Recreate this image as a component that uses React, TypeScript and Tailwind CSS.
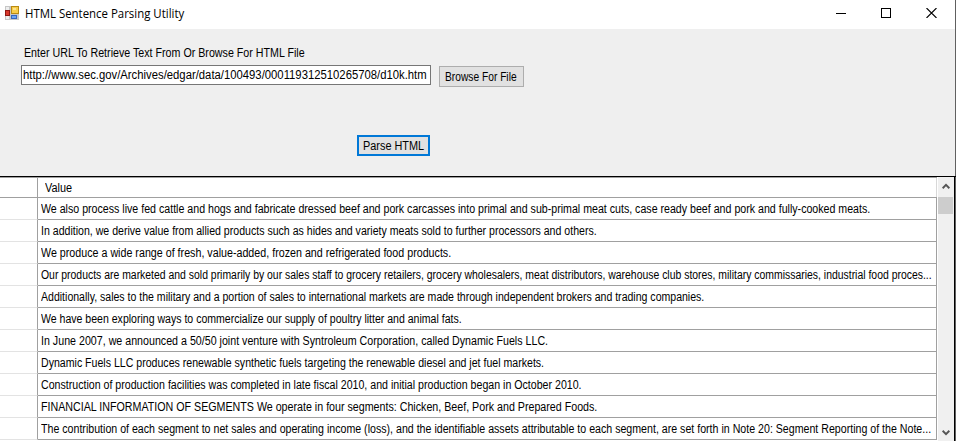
import { useLayoutEffect, useRef } from "react";

// Condenses a single line of text so that it fills the given width.
function Fit({ text, width, className = "" }: { text: string; width: number; className?: string }) {
  const ref = useRef<HTMLSpanElement>(null);
  useLayoutEffect(() => {
    const el = ref.current;
    if (!el) return;
    el.style.transform = `scaleX(${width / el.offsetWidth})`;
  }, [text, width]);
  return (
    <span ref={ref} className={`block w-max origin-left whitespace-pre ${className}`}>
      {text}
    </span>
  );
}

const rows: [string, number][] = [
  ["We also process live fed cattle and hogs and fabricate dressed beef and pork carcasses into primal and sub-primal meat cuts, case ready beef and pork and fully-cooked meats.", 829],
  ["In addition, we derive value from allied products such as hides and variety meats sold to further processors and others.", 556],
  ["We produce a wide range of fresh, value-added, frozen and refrigerated food products.", 410],
  ["Our products are marketed and sold primarily by our sales staff to grocery retailers, grocery wholesalers, meat distributors, warehouse club stores, military commissaries, industrial food proces...", 891],
  ["Additionally, sales to the military and a portion of sales to international markets are made through independent brokers and trading companies.", 663],
  ["We have been exploring ways to commercialize our supply of poultry litter and animal fats.", 421],
  ["In June 2007, we announced a 50/50 joint venture with Syntroleum Corporation, called Dynamic Fuels LLC.", 507],
  ["Dynamic Fuels LLC produces renewable synthetic fuels targeting the renewable diesel and jet fuel markets.", 503],
  ["Construction of production facilities was completed in late fiscal 2010, and initial production began in October 2010.", 541],
  ["FINANCIAL INFORMATION OF SEGMENTS We operate in four segments: Chicken, Beef, Pork and Prepared Foods.", 556],
  ["The contribution of each segment to net sales and operating income (loss), and the identifiable assets attributable to each segment, are set forth in Note 20: Segment Reporting of the Note...", 890],
];

function AppIcon() {
  return (
    <svg width="14" height="14" viewBox="0 0 14 14" shapeRendering="crispEdges">
      <rect width="14" height="14" fill="#c6c6c6" />
      <path d="M1 1h3v3H1zM1 10h3v3H1z" fill="#eee" />
      <rect x="0" y="4" width="5" height="6" fill="#8e1712" />
      <rect x="1" y="5" width="3" height="4" fill="#d8372b" />
      <rect x="6" y="0" width="8" height="8" fill="#b98a12" />
      <rect x="7" y="1" width="6" height="6" fill="#f8cc48" />
      <rect x="8" y="2" width="3" height="2" fill="#fde38c" />
      <rect x="6" y="9" width="6" height="4" fill="#3565bd" />
      <rect x="7" y="10" width="4" height="2" fill="#6ba3f2" />
    </svg>
  );
}

function Chevron({ down = false }: { down?: boolean }) {
  return (
    <svg width="8" height="7" viewBox="0 0 8 7" className={down ? "rotate-180" : ""}>
      <path d="M0.6 5.2 4 1.8 7.4 5.2" fill="none" stroke="#555" strokeWidth="2" />
    </svg>
  );
}

export default function App() {
  return (
    <div className="flex h-[441px] w-[956px] flex-col overflow-hidden bg-[#efefef] font-['Liberation_Sans',Arial,sans-serif] text-[12.5px] text-black">
      <header className="flex h-[29px] shrink-0 items-start border-r border-[#606060] bg-white">
        <div className="pt-[6px] pl-[5px]">
          <AppIcon />
        </div>
        <div className="w-[170px] pl-[6px] font-['Open_Sans','Noto_Sans',sans-serif] text-[12px] leading-[28px]">
          <Fit text="HTML Sentence Parsing Utility" width={159} />
        </div>
        <div className="ml-auto flex gap-[35px] pt-[8px] pr-[18px]">
          <svg width="10" height="10" shapeRendering="crispEdges"><path d="M0 5.5h10" stroke="#000" /></svg>
          <svg width="10" height="10" shapeRendering="crispEdges"><path d="M.5 .5h9v9h-9z" fill="none" stroke="#000" /></svg>
          <svg width="11" height="10"><path d="M.5 0l10 10M10.5 0l-10 10" stroke="#000" strokeWidth="1.1" /></svg>
        </div>
      </header>

      <section className="flex h-[147px] shrink-0 flex-col items-start border-r border-[#606060] pl-[21px]">
        <label className="mt-[14px] h-[22px] pl-[3px] leading-[20px]">
          <Fit text="Enter URL To Retrieve Text From Or Browse For HTML File" width={281} />
        </label>
        <div className="flex items-start gap-[8px]">
          <div className="h-[20px] w-[410px] border border-[#767676] bg-white pl-px leading-[18px]">
            <Fit text="http://www.sec.gov/Archives/edgar/data/100493/000119312510265708/d10k.htm" width={404} />
          </div>
          <button className="mt-px h-[21px] w-[85px] border border-[#adadad] bg-[#e1e1e1] pl-[5px] text-left leading-[20px]">
            <Fit text="Browse For File" width={72} />
          </button>
        </div>
        <button className="mt-[48px] ml-[336px] h-[21px] w-[73px] border-2 border-[#0078d7] bg-[#e1e1e1] pl-[4px] text-left leading-[18px]">
          <Fit text="Parse HTML" width={61} />
        </button>
      </section>

      <main className="flex h-[265px] shrink-0 border-t border-black bg-white">
        <div className="w-[937px] shrink-0 border-t border-[#a0a0a0]">
          <div className="flex h-[20px] border-b border-[#a0a0a0]">
            <div className="w-[38px] shrink-0 border-r border-[#a0a0a0]" />
            <div className="min-w-0 flex-1 border-r border-[#d8d8d8] pl-[7px] leading-[20px]">
              <Fit text="Value" width={27} />
            </div>
          </div>
          {rows.map(([text, width]) => (
            <div key={text} className="flex h-[22px]">
              <div className="w-[38px] shrink-0 border-r border-b border-r-[#a0a0a0] border-b-[#e3e3e3]" />
              <div className="min-w-0 flex-1 border-r border-b border-[#a0a0a0] pl-[3px] leading-[22px]">
                <Fit text={text} width={width} />
              </div>
            </div>
          ))}
        </div>
        <div className="ml-px flex w-[16px] flex-col items-center bg-[#f0f0f0]">
          <div className="flex h-[19px] items-center justify-center">
            <Chevron />
          </div>
          <div className="mt-px h-[17px] w-[15px] self-start bg-[#cdcdcd]" />
          <div className="mt-auto pb-[5px]">
            <Chevron down />
          </div>
        </div>
        <div className="w-px bg-black" />
        <div className="w-px bg-[#606060]" />
      </main>
    </div>
  );
}
